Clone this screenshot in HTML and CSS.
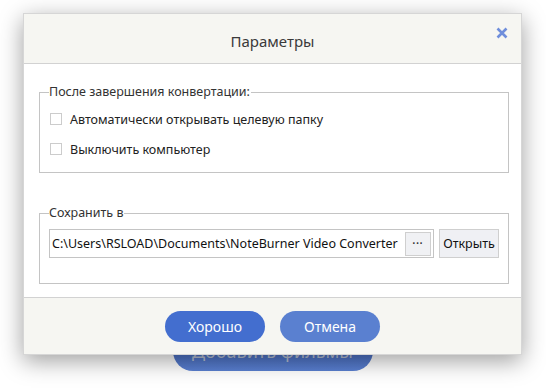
FILE: index.html
```html
<!DOCTYPE html>
<html lang="ru">
<head>
    <meta charset="UTF-8">
    <meta name="viewport" content="width=device-width, initial-scale=1.0">
    <title>Параметры</title>
    <link rel="stylesheet" href="styles.css">
</head>
<body>
    <!-- Main window content, mostly hidden by the dialog -->
    <div class="main">
        <button class="add-btn">Добавить фильмы</button>
    </div>

    <!-- Settings dialog -->
    <div class="dialog">
        <div class="dialog-header">
            <span class="dialog-title">Параметры</span>
            <span class="close-btn">
                <svg width="12" height="12" viewBox="0 0 12 12">
                    <path d="M1.5 1.5 L10.5 10.5 M10.5 1.5 L1.5 10.5" stroke="#6f8edb" stroke-width="2.6" fill="none"/>
                </svg>
            </span>
        </div>

        <div class="dialog-body">
            <fieldset class="group">
                <legend>После завершения конвертации:</legend>
                <label class="check-row">
                    <span class="check-box"></span>
                    Автоматически открывать целевую папку
                </label>
                <label class="check-row">
                    <span class="check-box"></span>
                    Выключить компьютер
                </label>
            </fieldset>

            <fieldset class="group save-group">
                <legend>Сохранить в</legend>
                <div class="path-row">
                    <div class="path-input">
                        <span class="path-text">C:\Users\RSLOAD\Documents\NoteBurner Video Converter</span>
                        <button class="browse-btn">&bull;&bull;&bull;</button>
                    </div>
                    <button class="open-btn">Открыть</button>
                </div>
            </fieldset>
        </div>

        <div class="dialog-footer">
            <button class="btn btn-ok">Хорошо</button>
            <button class="btn btn-cancel">Отмена</button>
        </div>
    </div>
</body>
</html>
```

FILE: styles.css
```css
/* Basic reset */
* {
    margin: 0;
    padding: 0;
    box-sizing: border-box;
}

body {
    width: 546px;
    height: 388px;
    background: #ffffff;
    font-family: "Noto Sans", "Open Sans", sans-serif;
    color: #222;
    position: relative;
    overflow: hidden;
}

/* Page behind the dialog */
.main {
    display: flex;
    justify-content: center;
    padding-top: 331px;
    padding-right: 1px;
}

.add-btn {
    width: 200px;
    height: 40px;
    border: none;
    border-radius: 20px;
    background: linear-gradient(#3f63b8, #5a80d2);
    color: #b9c2d6;
    font-family: inherit;
    font-size: 18px;
}

/* Dialog box */
.dialog {
    position: absolute;
    left: 23px;
    top: 13px;
    width: 499px;
    border: 1px solid #d6d6d6;
    background: #fff;
    box-shadow: 0 6px 22px rgba(0, 0, 0, 0.38);
}

.dialog-header {
    height: 50px;
    background: #f6f6f2;
    border-bottom: 1px solid #d2d2d2;
    display: flex;
    justify-content: center;
    align-items: center;
    position: relative;
}

.dialog-title {
    font-size: 15px;
    color: #3a3a3a;
    padding-top: 4px;
}

.close-btn {
    position: absolute;
    right: 13px;
    top: 13px;
    width: 12px;
    height: 12px;
    display: flex;
}

.dialog-body {
    padding: 19px 12px 13px 15px;
}

/* Grouped options */
.group {
    border: 1px solid #c4c4c4;
    padding: 8px 9px 13px 9px;
}

.group legend {
    font-size: 12.5px;
    line-height: 18px;
    color: #333;
    padding: 0 1px 0 0;
}

.check-row {
    display: flex;
    align-items: center;
    gap: 8px;
    height: 20px;
    font-size: 12.5px;
    color: #222;
}

.check-row + .check-row {
    margin-top: 10px;
}

.check-box {
    width: 12px;
    height: 12px;
    border: 1px solid #cccccc;
    background: #fff;
    margin-left: 1px;
}

.save-group {
    margin-top: 31px;
    padding: 7px 9px 25px 9px;
}

.path-row {
    display: flex;
    gap: 5px;
}

.path-input {
    flex: 1;
    height: 29px;
    border: 1px solid #c4c4c4;
    display: flex;
    align-items: center;
    justify-content: space-between;
    padding: 0 2px 0 2px;
}

.path-text {
    font-size: 12.5px;
    color: #111;
    white-space: nowrap;
}

.browse-btn {
    width: 26px;
    height: 24px;
    border: 1px solid #cfcfcf;
    background: #f0f1f4;
    color: #333;
    font-size: 7px;
    letter-spacing: 1px;
    font-family: inherit;
}

.open-btn {
    width: 60px;
    height: 29px;
    border: 1px solid #cfcfcf;
    background: #eff0f4;
    color: #111;
    font-family: inherit;
    font-size: 12.5px;
}

/* Footer buttons */
.dialog-footer {
    height: 57px;
    background: #f6f6f2;
    border-top: 1px solid #d2d2d2;
    display: flex;
    justify-content: center;
    align-items: flex-start;
    gap: 15px;
    padding-top: 13px;
}

.btn {
    width: 100px;
    height: 31px;
    border: none;
    border-radius: 16px;
    color: #fff;
    font-family: inherit;
    font-size: 14px;
}

.btn-ok {
    background-color: #436ecf;
}

.btn-cancel {
    background-color: #5a80d0;
}
```
